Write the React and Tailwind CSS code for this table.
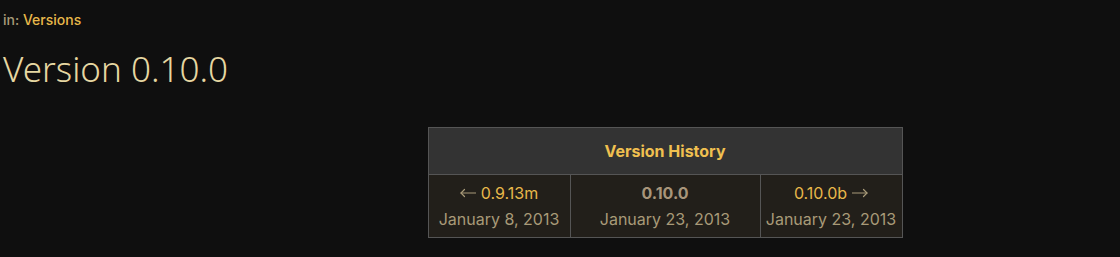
function Arrow({ dir }) {
  // thin long arrow used beside the neighbour version links
  const left = dir === "left";
  return (
    <svg
      width="16"
      height="10"
      viewBox="0 0 16 10"
      className="inline-block align-[1px]"
      fill="none"
      stroke="#a89a78"
      strokeWidth="1.2"
      strokeLinecap="round"
      strokeLinejoin="round"
    >
      {left ? (
        <>
          <path d="M1 5H15.5" />
          <path d="M4.5 1.5L1 5L4.5 8.5" />
        </>
      ) : (
        <>
          <path d="M0.5 5H15" />
          <path d="M11.5 1.5L15 5L11.5 8.5" />
        </>
      )}
    </svg>
  );
}

export default function App() {
  const body = { fontFamily: "Inter, 'Noto Sans', sans-serif" };
  const title = { fontFamily: "'Noto Sans', sans-serif" };
  return (
    <div className="min-h-[257px] w-[1120px] bg-[#0f0f0f] px-[3px] pt-[11px]" style={body}>
      <div className="text-[14px] font-medium leading-[18px] text-[#a89a78]">
        in: <span className="text-[#e8b84a]">Versions</span>
      </div>
      <h1 className="mt-[20px] text-[35px] font-light leading-[40px] text-[#e6d7a2]" style={title}>
        Version 0.10.0
      </h1>
      <div className="mt-[38px] flex justify-center pl-[210px]">
        <table className="w-[475px] border-collapse border border-[#555] text-center">
          <thead>
            <tr className="bg-[#333333]">
              <th colSpan={3} className="h-[47px] border border-[#555] text-[16px] font-bold text-[#f0c050]">
                Version History
              </th>
            </tr>
          </thead>
          <tbody>
            <tr className="bg-[#221f1a] text-[16px]">
              <td className="w-[142px] border border-[#555] py-[6px]">
                <div className="flex items-center justify-center gap-[5px] leading-[24px]">
                  <Arrow dir="left" />
                  <span className="text-[#e8b84a]">0.9.13m</span>
                </div>
                <div className="mt-[2px] leading-[24px] text-[#a89a78]">January 8, 2013</div>
              </td>
              <td className="w-[190px] border border-[#555] py-[6px]">
                <div className="font-bold leading-[24px] text-[#a8957a]">0.10.0</div>
                <div className="mt-[2px] leading-[24px] text-[#a89a78]">January 23, 2013</div>
              </td>
              <td className="border border-[#555] py-[6px]">
                <div className="flex items-center justify-center gap-[5px] leading-[24px]">
                  <span className="text-[#e8b84a]">0.10.0b</span>
                  <Arrow dir="right" />
                </div>
                <div className="mt-[2px] leading-[24px] text-[#a89a78]">January 23, 2013</div>
              </td>
            </tr>
          </tbody>
        </table>
      </div>
    </div>
  );
}
